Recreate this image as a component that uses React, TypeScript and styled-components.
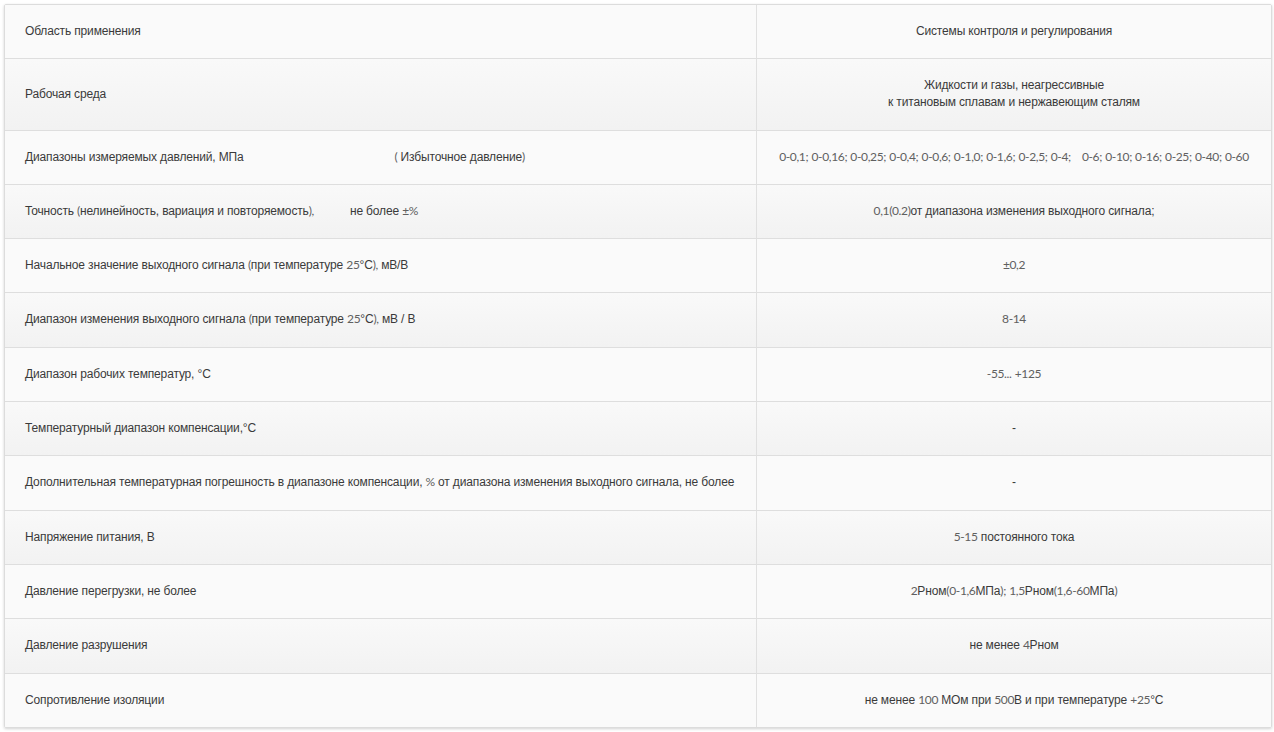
import React from 'react';
import styled, { createGlobalStyle } from 'styled-components';

const Global = createGlobalStyle`
  body {
    margin: 0;
    background: #fff;
    font-family: 'Liberation Sans', Arial, sans-serif;
  }
`;

type Part = string | { gap: number };

const rows: { name: Part[]; value: Part[] }[] = [
  { name: ['Область применения'], value: ['Системы контроля и регулирования'] },
  {
    name: ['Рабочая среда'],
    value: ['Жидкости и газы, неагрессивные\nк титановым сплавам и нержавеющим сталям'],
  },
  {
    name: ['Диапазоны измеряемых давлений, МПа', { gap: 151 }, '( Избыточное давление)'],
    value: [
      '0-0,1; 0-0,16; 0-0,25; 0-0,4; 0-0,6; 0-1,0; 0-1,6; 0-2,5; 0-4;',
      { gap: 11 },
      '0-6; 0-10; 0-16; 0-25; 0-40; 0-60',
    ],
  },
  {
    name: ['Точность (нелинейность, вариация и повторяемость),', { gap: 36 }, 'не более ±%'],
    value: ['0,1(0.2)от диапазона изменения выходного сигнала;'],
  },
  {
    name: ['Начальное значение выходного сигнала (при температуре 25°C), мВ/В'],
    value: ['±0,2'],
  },
  {
    name: ['Диапазон изменения выходного сигнала  (при температуре 25°C), мВ / В'],
    value: ['8-14'],
  },
  { name: ['Диапазон рабочих температур, °C'], value: ['-55... +125'] },
  { name: ['Температурный диапазон компенсации,°C'], value: ['-'] },
  {
    name: [
      'Дополнительная температурная погрешность в диапазоне компенсации, % от диапазона изменения выходного сигнала, не более',
    ],
    value: ['-'],
  },
  { name: ['Напряжение питания, В'], value: ['5-15 постоянного тока'] },
  { name: ['Давление перегрузки, не более'], value: ['2Рном(0-1,6МПа); 1,5Рном(1,6-60МПа)'] },
  { name: ['Давление разрушения'], value: ['не менее 4Рном'] },
  {
    name: ['Сопротивление изоляции'],
    value: ['не менее 100 МОм при 500В и при температуре +25°C'],
  },
];

// digits and their punctuation are set in Lato, the rest falls to Liberation Sans
const NUM = /([0-9()±%+]+(?:[-.,;…][0-9()±%+]*)*|-(?=[0-9 ]))/g;

function Text({ text }: { text: string }) {
  const out: React.ReactNode[] = [];
  let last = 0;
  let m: RegExpExecArray | null;
  NUM.lastIndex = 0;
  while ((m = NUM.exec(text))) {
    if (m.index > last) out.push(text.slice(last, m.index));
    out.push(<Num key={m.index}>{m[0]}</Num>);
    last = m.index + m[0].length;
  }
  if (last < text.length) out.push(text.slice(last));
  return <>{out}</>;
}

function Content({ parts }: { parts: Part[] }) {
  return (
    <>
      {parts.map((p, i) =>
        typeof p === 'string' ? (
          p.split('\n').map((line, j) => (
            <React.Fragment key={`${i}-${j}`}>
              {j > 0 && <br />}
              <Text text={line} />
            </React.Fragment>
          ))
        ) : (
          <Gap key={i} $w={p.gap} />
        )
      )}
    </>
  );
}

export default function App() {
  return (
    <>
      <Global />
      <Wrap>
        <Table>
          <colgroup>
            <col style={{ width: 752 }} />
            <col />
          </colgroup>
          <tbody>
            {rows.map((r, i) => (
              <Row key={i} $even={i % 2 === 1}>
                <NameCell>
                  <Content parts={r.name} />
                </NameCell>
                <ValueCell>
                  <Content parts={r.value} />
                </ValueCell>
              </Row>
            ))}
          </tbody>
        </Table>
      </Wrap>
    </>
  );
}

const Wrap = styled.div`
  margin: 4px;
  width: 1266px;
  border: 1px solid #dcdcdc;
  border-radius: 2px;
  box-shadow: 0 1px 3px rgba(0, 0, 0, 0.18);
  overflow: hidden;
`;

const Table = styled.table`
  width: 100%;
  border-collapse: separate;
  border-spacing: 0;
  table-layout: fixed;
  font-size: 12px;
  line-height: 17px;
  letter-spacing: -0.15px;
  color: #3a3a3a;
`;

const Row = styled.tr<{ $even: boolean }>`
  background: ${(p) => (p.$even ? 'linear-gradient(#f9f9f9, #f2f2f2)' : '#fafafa')};
  td {
    border-bottom: 1px solid #dedede;
  }
  &:last-child td {
    border-bottom: none;
  }
`;

const NameCell = styled.td`
  padding: 18px 20px 18.3px;
  text-align: left;
  vertical-align: middle;
  border-right: 1px solid #e0e0e0;
  white-space: nowrap;
`;

const ValueCell = styled.td`
  padding: 18px 10px 18.3px;
  text-align: center;
  vertical-align: middle;
  white-space: nowrap;
`;

const Num = styled.span`
  font-family: Lato, 'Liberation Sans', sans-serif;
  font-weight: 400;
  line-height: 1;
  letter-spacing: -0.35px;
  color: #606060;
`;

const Gap = styled.span<{ $w: number }>`
  display: inline-block;
  width: ${(p) => p.$w}px;
`;
